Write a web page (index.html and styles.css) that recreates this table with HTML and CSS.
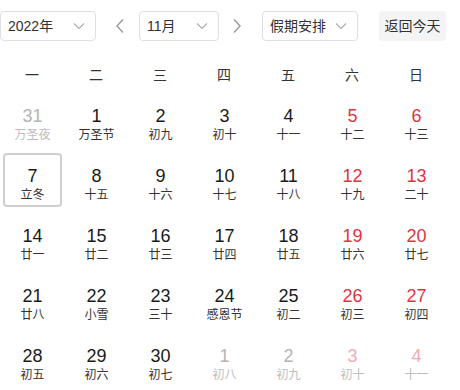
FILE: index.html
```html
<!DOCTYPE html>
<html lang="zh-CN">
<head>
<meta charset="utf-8">
<title>日历</title>
<link rel="stylesheet" href="styles.css">
</head>
<body>
<div class="cal">
  <div class="toolbar">
    <div class="select sel-year"><span>2022年</span><svg class="chev" viewBox="0 0 12 8" width="12" height="8"><path d="M1 1.5 L6 6.5 L11 1.5" fill="none" stroke="#a8abb2" stroke-width="1.1"/></svg></div>
    <div class="arrow prev"><svg viewBox="0 0 10 16" width="10" height="16"><path d="M8 1.5 L2 8 L8 14.5" fill="none" stroke="#9a9a9a" stroke-width="1.4"/></svg></div>
    <div class="select sel-month"><span>11月</span><svg class="chev" viewBox="0 0 12 8" width="12" height="8"><path d="M1 1.5 L6 6.5 L11 1.5" fill="none" stroke="#a8abb2" stroke-width="1.1"/></svg></div>
    <div class="arrow next"><svg viewBox="0 0 10 16" width="10" height="16"><path d="M2 1.5 L8 8 L2 14.5" fill="none" stroke="#9a9a9a" stroke-width="1.4"/></svg></div>
    <div class="select sel-holiday"><span>假期安排</span><svg class="chev" viewBox="0 0 12 8" width="12" height="8"><path d="M1 1.5 L6 6.5 L11 1.5" fill="none" stroke="#a8abb2" stroke-width="1.1"/></svg></div>
    <div class="today-btn">返回今天</div>
  </div>
  <div class="weekdays">
    <div>一</div><div>二</div><div>三</div><div>四</div><div>五</div><div>六</div><div>日</div>
  </div>
  <div class="days">
    <div class="cell other"><div class="num">31</div><div class="lunar">万圣夜</div></div>
    <div class="cell"><div class="num">1</div><div class="lunar">万圣节</div></div>
    <div class="cell"><div class="num">2</div><div class="lunar">初九</div></div>
    <div class="cell"><div class="num">3</div><div class="lunar">初十</div></div>
    <div class="cell"><div class="num">4</div><div class="lunar">十一</div></div>
    <div class="cell weekend"><div class="num">5</div><div class="lunar">十二</div></div>
    <div class="cell weekend"><div class="num">6</div><div class="lunar">十三</div></div>

    <div class="cell selected"><div class="num">7</div><div class="lunar">立冬</div></div>
    <div class="cell"><div class="num">8</div><div class="lunar">十五</div></div>
    <div class="cell"><div class="num">9</div><div class="lunar">十六</div></div>
    <div class="cell"><div class="num">10</div><div class="lunar">十七</div></div>
    <div class="cell"><div class="num">11</div><div class="lunar">十八</div></div>
    <div class="cell weekend"><div class="num">12</div><div class="lunar">十九</div></div>
    <div class="cell weekend"><div class="num">13</div><div class="lunar">二十</div></div>

    <div class="cell"><div class="num">14</div><div class="lunar">廿一</div></div>
    <div class="cell"><div class="num">15</div><div class="lunar">廿二</div></div>
    <div class="cell"><div class="num">16</div><div class="lunar">廿三</div></div>
    <div class="cell"><div class="num">17</div><div class="lunar">廿四</div></div>
    <div class="cell"><div class="num">18</div><div class="lunar">廿五</div></div>
    <div class="cell weekend"><div class="num">19</div><div class="lunar">廿六</div></div>
    <div class="cell weekend"><div class="num">20</div><div class="lunar">廿七</div></div>

    <div class="cell"><div class="num">21</div><div class="lunar">廿八</div></div>
    <div class="cell"><div class="num">22</div><div class="lunar">小雪</div></div>
    <div class="cell"><div class="num">23</div><div class="lunar">三十</div></div>
    <div class="cell"><div class="num">24</div><div class="lunar">感恩节</div></div>
    <div class="cell"><div class="num">25</div><div class="lunar">初二</div></div>
    <div class="cell weekend"><div class="num">26</div><div class="lunar">初三</div></div>
    <div class="cell weekend"><div class="num">27</div><div class="lunar">初四</div></div>

    <div class="cell"><div class="num">28</div><div class="lunar">初五</div></div>
    <div class="cell"><div class="num">29</div><div class="lunar">初六</div></div>
    <div class="cell"><div class="num">30</div><div class="lunar">初七</div></div>
    <div class="cell other"><div class="num">1</div><div class="lunar">初八</div></div>
    <div class="cell other"><div class="num">2</div><div class="lunar">初九</div></div>
    <div class="cell other weekend"><div class="num">3</div><div class="lunar">初十</div></div>
    <div class="cell other weekend"><div class="num">4</div><div class="lunar">十一</div></div>
  </div>
</div>
</body>
</html>
```

FILE: styles.css
```css
html, body {
  margin: 0;
  padding: 0;
  background: #fff;
}
body {
  font-family: "Liberation Sans", "Noto Sans CJK SC", sans-serif;
  color: #222;
}
.cal {
  width: 448px;
  padding-top: 11px;
}
.toolbar {
  display: flex;
  align-items: center;
  height: 30px;
}
.select {
  box-sizing: border-box;
  height: 30px;
  border: 1px solid #dcdfe6;
  border-radius: 4px;
  display: flex;
  align-items: center;
  justify-content: space-between;
  padding: 0 10px 0 7px;
  font-size: 14px;
  line-height: 20px;
  color: #303133;
}
.sel-year { width: 96px; }
.sel-month { width: 80px; margin-left: 11px; }
.sel-holiday { width: 96px; margin-left: 17px; }
.chev { display: block; }
.arrow {
  width: 16px;
  height: 30px;
  display: flex;
  align-items: center;
  justify-content: center;
}
.prev { margin-left: 16px; }
.next { margin-left: 10px; }
.today-btn {
  margin-left: 21px;
  box-sizing: border-box;
  width: 67px;
  height: 30px;
  border-radius: 4px;
  background: #f4f4f5;
  font-size: 14px;
  line-height: 30px;
  text-align: center;
  color: #303133;
}
.weekdays {
  margin-top: 18px;
  display: grid;
  grid-template-columns: repeat(7, 64px);
  height: 32px;
  font-size: 14px;
  line-height: 32px;
  text-align: center;
  color: #333;
}
.days {
  margin-top: -1px;
  display: grid;
  grid-template-columns: repeat(7, 64px);
  grid-auto-rows: 60px;
}
.cell {
  box-sizing: border-box;
  margin: 3px 2px 3px 3px;
  border: 2px solid transparent;
  border-radius: 4px;
  display: flex;
  flex-direction: column;
  align-items: center;
  justify-content: center;
  padding-top: 8px;
}
.cell.selected {
  border-color: #cfcfcf;
}
.num {
  font-size: 18px;
  line-height: 20px;
  color: #1a1a1a;
}
.lunar {
  font-size: 12px;
  line-height: 16px;
  margin-top: 1px;
  color: #333;
}
.weekend .num { color: #e0343f; }
.other .num { color: #b4b4b4; }
.other .lunar { color: #bdbdbd; }
.other.weekend .num { color: #f2a9b0; }
```
